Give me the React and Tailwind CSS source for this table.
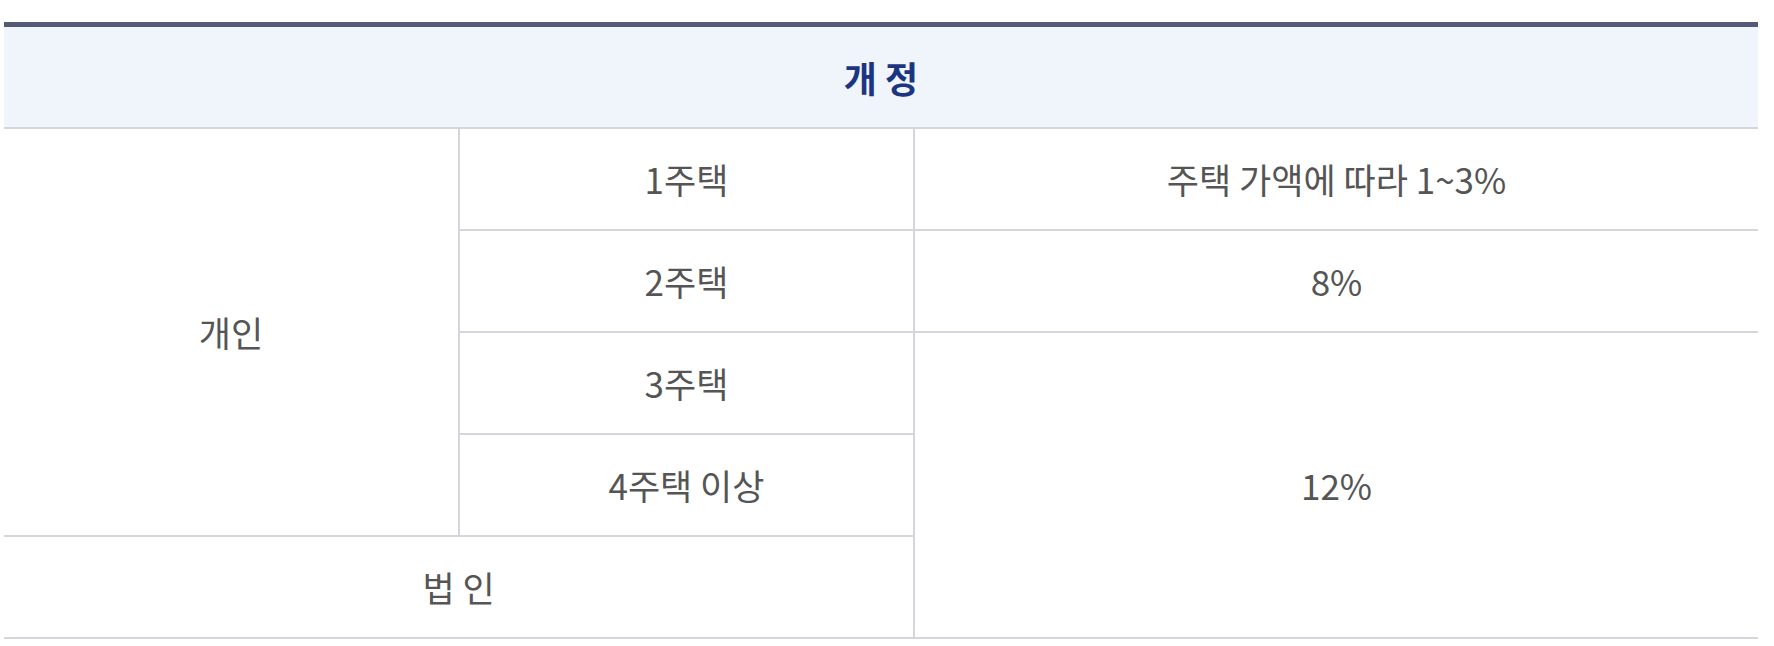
export default function App() {
  const cell = "border-[#d5d5dc] text-center align-middle font-normal text-[35px] text-[#555555]";
  return (
    <div className="w-full min-h-screen bg-white pl-[4px] pr-[16px] pt-[22px]" style={{ fontFamily: '"Noto Sans CJK KR", "Noto Sans", sans-serif' }}>
      <table className="w-full table-fixed border-separate border-spacing-0">
        <colgroup>
          <col className="w-[456px]" />
          <col className="w-[455px]" />
          <col />
        </colgroup>
        <thead>
          <tr>
            <th
              colSpan={3}
              className="h-[107px] border-t-[5px] border-b-2 border-t-[#525a78] border-b-[#d5d5dc] bg-[#f0f4fb] text-center align-middle text-[36px] font-bold text-[#1c3582]"
            >
              개&nbsp;정
            </th>
          </tr>
        </thead>
        <tbody>
          <tr>
            <td rowSpan={4} className={`${cell} border-b-2 border-r-2`}>개인</td>
            <td className={`${cell} h-[102px] border-b-2 border-r-2`}>1주택</td>
            <td className={`${cell} border-b-2`}>주택 가액에 따라 1~3%</td>
          </tr>
          <tr>
            <td className={`${cell} h-[102px] border-b-2 border-r-2`}>2주택</td>
            <td className={`${cell} border-b-2`}>8%</td>
          </tr>
          <tr>
            <td className={`${cell} h-[102px] border-b-2 border-r-2`}>3주택</td>
            <td rowSpan={3} className={`${cell} border-b-2`}>12%</td>
          </tr>
          <tr>
            <td className={`${cell} h-[102px] border-b-2 border-r-2`}>4주택 이상</td>
          </tr>
          <tr>
            <td colSpan={2} className={`${cell} h-[102px] border-b-2 border-r-2`}>법&nbsp;인</td>
          </tr>
        </tbody>
      </table>
    </div>
  );
}
